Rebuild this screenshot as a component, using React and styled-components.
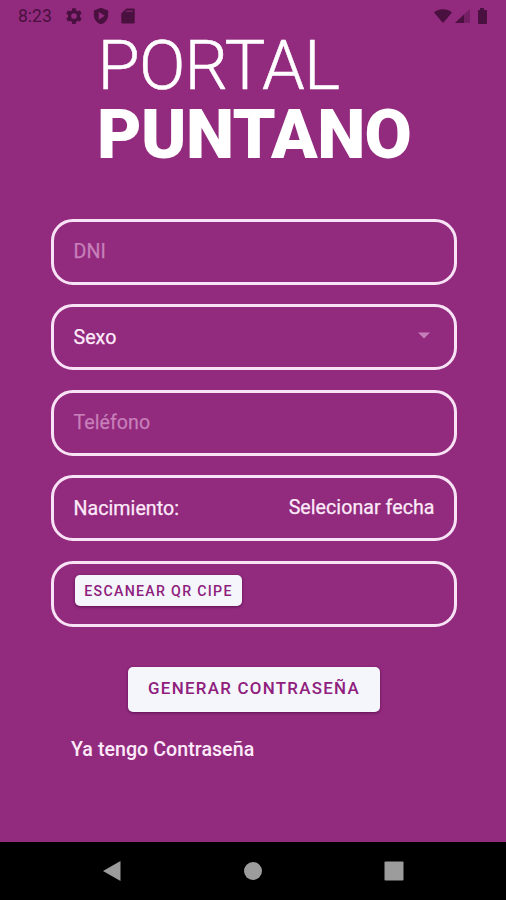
import React from "react";
import styled, { createGlobalStyle } from "styled-components";

const GlobalStyle = createGlobalStyle`
  * { box-sizing: border-box; }
  body { margin: 0; background: #922a7d; }
`;

const Screen = styled.div`
  width: 506px;
  height: 900px;
  display: flex;
  flex-direction: column;
  overflow: hidden;
  background: #922a7d;
  color: #fdeafa;
  font-family: Roboto, "Liberation Sans", sans-serif;
`;

const StatusBar = styled.header`
  height: 31px;
  flex: none;
  display: flex;
  justify-content: space-between;
  padding: 0 14px 0 18px;
  color: #4a103f;
`;

const StatusGroup = styled.div`
  display: flex;
  align-items: center;
  gap: ${(p) => p.$gap}px;
  svg { display: block; }
`;

const Clock = styled.span`
  width: 36px;
  margin-right: 2px;
  font-size: 17.5px;
  line-height: 32px;
  white-space: nowrap;
`;

const Title = styled.h1`
  margin: 0 0 0 95px;
  height: 187.6px;
  flex: none;
  color: #fff;
  font-size: 68.5px;
  line-height: 69px;
  font-weight: 300;
`;

const TitleLine = styled.span`
  display: block;
  white-space: nowrap;
  font-weight: ${(p) => p.$weight};
  letter-spacing: ${(p) => p.$spacing}px;
  margin-left: ${(p) => p.$indent || 0}px;
  -webkit-text-stroke: ${(p) => p.$stroke || 0}px currentColor;
`;

const Form = styled.form`
  flex: 1;
  display: flex;
  flex-direction: column;
  padding: 0 49px 0 51px;
`;

const Fields = styled.div`
  display: grid;
  grid-auto-rows: 66px;
  row-gap: 19.5px;
`;

const Field = styled.div`
  display: flex;
  align-items: center;
  justify-content: space-between;
  border: 3px solid #f8e2f5;
  border-radius: 22px;
  padding: 0 19.5px;
  font-size: 19.6px;
  line-height: 24px;
`;

const FieldText = styled.span`
  color: ${(p) => (p.$muted ? "#c77fba" : "#fdeafa")};
  letter-spacing: 0.05px;
  padding-top: ${(p) => p.$drop || 0}px;
  white-space: nowrap;
  -webkit-text-stroke: 0.25px currentColor;
`;

const Caret = styled.svg`
  display: block;
  margin: 0 5px 3px 0;
`;

const Button = styled.button`
  border: 0;
  padding: 0;
  background: #f4f6fc;
  color: #8f207c;
  font-family: inherit;
  font-weight: 500;
  white-space: nowrap;
  border-radius: 5px;
  box-shadow: 0 1px 3px rgba(60, 0, 60, 0.6);
`;

const ScanButton = styled(Button)`
  width: 167px;
  height: 31px;
  margin: 0 0 6px 1.5px;
  font-size: 14.2px;
  letter-spacing: 1.3px;
`;

const SubmitButton = styled(Button)`
  align-self: center;
  width: 252px;
  height: 45px;
  margin: 40.4px 0 0 -1px;
  padding: 0 0 2px 1px;
  font-size: 16.9px;
  letter-spacing: 1.28px;
`;

const LoginLink = styled.a`
  margin: 26px 0 0 20px;
  font-size: 19.6px;
  line-height: 24px;
  font-weight: 500;
  letter-spacing: 0.05px;
  white-space: nowrap;
`;

const NavBar = styled.nav`
  height: 58px;
  flex: none;
  display: flex;
  justify-content: space-between;
  align-items: center;
  padding: 0 102px;
  background: #000;
  color: #9c9c9c;
  svg { display: block; }
`;

export default function App() {
  return (
    <>
      <GlobalStyle />
      <Screen>
        <StatusBar>
          <StatusGroup $gap={9}>
            <Clock>8:23</Clock>
            <svg width="18" height="18" viewBox="0 0 24 24" fill="currentColor">
              <path fillRule="evenodd" d="M9.7 1.5h4.6l.6 3 2.1 1.2 3-1 2.3 4-2.3 2.1v2.4l2.3 2.1-2.3 4-3-1-2.1 1.2-.6 3H9.7l-.6-3L7 18.300l-3 1-2.300-4L4 13.200v-2.400L1.700 8.700l2.300-4 3 1 2.100-1.200zM12 8.200a3.800 3.800 0 1 0 0 7.600 3.800 3.800 0 0 0 0-7.600z" />
            </svg>
            <svg width="18" height="18" viewBox="0 0 24 24" fill="currentColor">
              <path fillRule="evenodd" d="M12 1L2.500 4.500V11c0 5.500 4 10.300 9.500 12 5.500-1.700 9.500-6.500 9.500-12V4.500zM9 6.500l8 5.300-8 5.200z" />
            </svg>
            <svg width="18" height="18" viewBox="0 0 24 24" fill="currentColor">
              <path fillRule="evenodd" d="M10 2h9c1.100 0 2 .9 2 2v16c0 1.100-.9 2-2 2H5c-1.100 0-2-.9-2-2V8.500z" />
              <path d="M10 4.500h8.500v2H9z" fill="#7b2268" />
            </svg>
          </StatusGroup>
          <StatusGroup $gap={2}>
            <svg width="20" height="16" viewBox="0 0 20 16" fill="currentColor">
              <path d="M1 4.500C6 .3 14 .3 19 4.500L10 15z" />
            </svg>
            <svg width="15" height="16" viewBox="0 0 15 16" fill="currentColor">
              <path opacity=".4" d="M0 15L15 1v14z" />
              <path d="M0 15L9 6.500V15z" />
            </svg>
            <svg width="20" height="16" viewBox="0 0 20 16" fill="currentColor">
              <path d="M8 0h4v2h2q1 0 1 1v12q0 1-1 1H7q-1 0-1-1V3q0-1 1-1h1z" />
            </svg>
          </StatusGroup>
        </StatusBar>
        <Title>
          <TitleLine $weight={300} $spacing={-0.8} $indent={2.5} $stroke={0.5}>PORTAL</TitleLine>
          <TitleLine $weight={900} $spacing={-0.6} $indent={2}>PUNTANO</TitleLine>
        </Title>
        <Form>
          <Fields>
            <Field><FieldText $muted>DNI</FieldText></Field>
            <Field>
              <FieldText $drop={1}>Sexo</FieldText>
              <Caret width="12" height="7" viewBox="0 0 12 7" fill="#c77fba">
                <path d="M0 0.500h12L6 6.500z" />
              </Caret>
            </Field>
            <Field><FieldText $muted>Teléfono</FieldText></Field>
            <Field>
              <FieldText $drop={1}>Nacimiento:</FieldText>
              <FieldText>Selecionar fecha</FieldText>
            </Field>
            <Field><ScanButton type="button">ESCANEAR QR CIPE</ScanButton></Field>
          </Fields>
          <SubmitButton type="button">GENERAR CONTRASEÑA</SubmitButton>
          <LoginLink>Ya tengo Contraseña</LoginLink>
        </Form>
        <NavBar>
          <svg width="20" height="22" viewBox="0 0 20 22" fill="currentColor">
            <path d="M18.500 1v20L1 11z" />
          </svg>
          <svg width="20" height="20" viewBox="0 0 20 20" fill="currentColor">
            <circle cx="10" cy="10" r="9" />
          </svg>
          <svg width="20" height="20" viewBox="0 0 20 20" fill="currentColor">
            <rect x="0.500" y="0.500" width="19" height="19" rx="1" />
          </svg>
        </NavBar>
      </Screen>
    </>
  );
}
